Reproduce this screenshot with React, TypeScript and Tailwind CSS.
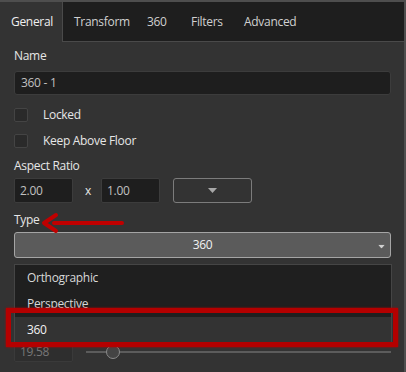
import React from "react";

const font = { fontFamily: '"Open Sans", "Noto Sans", sans-serif' };

function Tri({ className }: { className?: string }) {
  return (
    <svg width="9" height="5" viewBox="0 0 9 5" className={className}>
      <path d="M0 0 L9 0 L4.5 5 Z" fill="currentColor" />
    </svg>
  );
}

export default function App() {
  return (
    <div
      className="relative w-[406px] h-[372px] overflow-hidden bg-[#333333] border-t-2 border-r-2 border-[#4e4e4e] text-[12px] tracking-[-0.3px] text-[#e6e6e6]"
      style={font}
    >
      {/* Tabs */}
      <div className="flex h-[40px]">
        <div className="w-[62px] flex items-center pl-[11px] text-[#f0f0f0]">General</div>
        <div className="flex-1 flex items-center bg-[#1e1e1e] border-l border-b border-[#4a4a4a] text-[#d0d0d0]">
          <span className="ml-[11px] w-[73px]">Transform</span>
          <span className="w-[44px]">360</span>
          <span className="w-[53px]">Filters</span>
          <span>Advanced</span>
        </div>
      </div>

      <div className="px-[14px] pr-[13px]">
        <div className="mt-[6px] h-[16px] leading-[16px]">Name</div>
        <div className="mt-[7px] h-[24px] rounded-[3px] bg-[#1e1e1e] border border-[#3c3c3c] flex items-center pl-[6px] text-[#c0c0c0]">
          360 - 1
        </div>

        <div className="mt-[10px] h-[20px] flex items-center">
          <div className="w-[14px] h-[14px] rounded-[2px] bg-[#2a2a2a] border border-[#444]" />
          <span className="ml-[15px]">Locked</span>
        </div>
        <div className="mt-[6px] h-[20px] flex items-center">
          <div className="w-[14px] h-[14px] rounded-[2px] bg-[#2a2a2a] border border-[#444]" />
          <span className="ml-[15px]">Keep Above Floor</span>
        </div>

        <div className="mt-[7px] h-[16px] leading-[16px]">Aspect Ratio</div>
        <div className="mt-[4px] flex items-center h-[25px]">
          <div className="w-[59px] h-[25px] rounded-[2px] bg-[#1e1e1e] border border-[#3c3c3c] flex items-center pl-[5px] text-[#c0c0c0]">2.00</div>
          <span className="ml-[12px] w-[16px]">x</span>
          <div className="w-[59px] h-[25px] rounded-[2px] bg-[#1e1e1e] border border-[#3c3c3c] flex items-center pl-[5px] text-[#c0c0c0]">1.00</div>
          <div className="ml-[13px] w-[79px] h-[25px] rounded-[3px] border border-[#7c7c7c] flex items-center justify-center text-[#a8a8a8]">
            <Tri />
          </div>
        </div>

        <div className="mt-[9px] h-[16px] leading-[16px]">Type</div>
        <div className="mt-[4px] h-[26px] rounded-[3px] bg-[#5b5b5b] border border-[#a5a5a5] relative flex items-center justify-center text-[#f2f2f2]">
          360
          <Tri className="absolute right-[4px] top-[11px] text-[#cfcfcf] scale-75" />
        </div>

        <div className="mt-[83px] flex items-center h-[21px]">
          <div className="w-[59px] h-[21px] rounded-[2px] bg-[#2e2e2e] border border-[#3a3a3a] flex items-center pl-[5px] text-[#777]">19.58</div>
          <div className="ml-[13px] flex-1 relative h-[16px] flex items-center">
            <div className="w-full h-[2px] bg-[#5c5c5c]" />
            <div className="absolute left-[20px] top-[1px] w-[14px] h-[14px] rounded-full border border-[#8a8a8a] bg-[#444]" />
          </div>
        </div>
      </div>

      {/* Dropdown menu */}
      <div className="absolute left-[14px] top-[262px] w-[378px] h-[80px] bg-[#1f1f1f] border border-[#454545] text-[#d8d8d8]">
        <div className="h-[26px] flex items-center pl-[12px]">Orthographic</div>
        <div className="h-[26px] flex items-center pl-[12px]">Perspective</div>
        <div className="h-[26px] flex items-center pl-[12px] bg-[#333333] text-[#f2f2f2]">360</div>
      </div>

      {/* Red highlight */}
      <div className="absolute left-[6px] top-[306px] w-[392px] h-[39px] border-[5px] border-[#b40000] shadow-[0_0_2px_#b40000]" />

      {/* Red arrow */}
      <svg className="absolute left-[40px] top-[210px]" width="86" height="22" viewBox="0 0 86 22">
        <path d="M14 11 L82 11" stroke="#c00000" strokeWidth="4" strokeLinecap="round" />
        <path d="M16 3 L4 11 L16 19" stroke="#c00000" strokeWidth="4" fill="none" strokeLinecap="round" strokeLinejoin="round" />
      </svg>
    </div>
  );
}
